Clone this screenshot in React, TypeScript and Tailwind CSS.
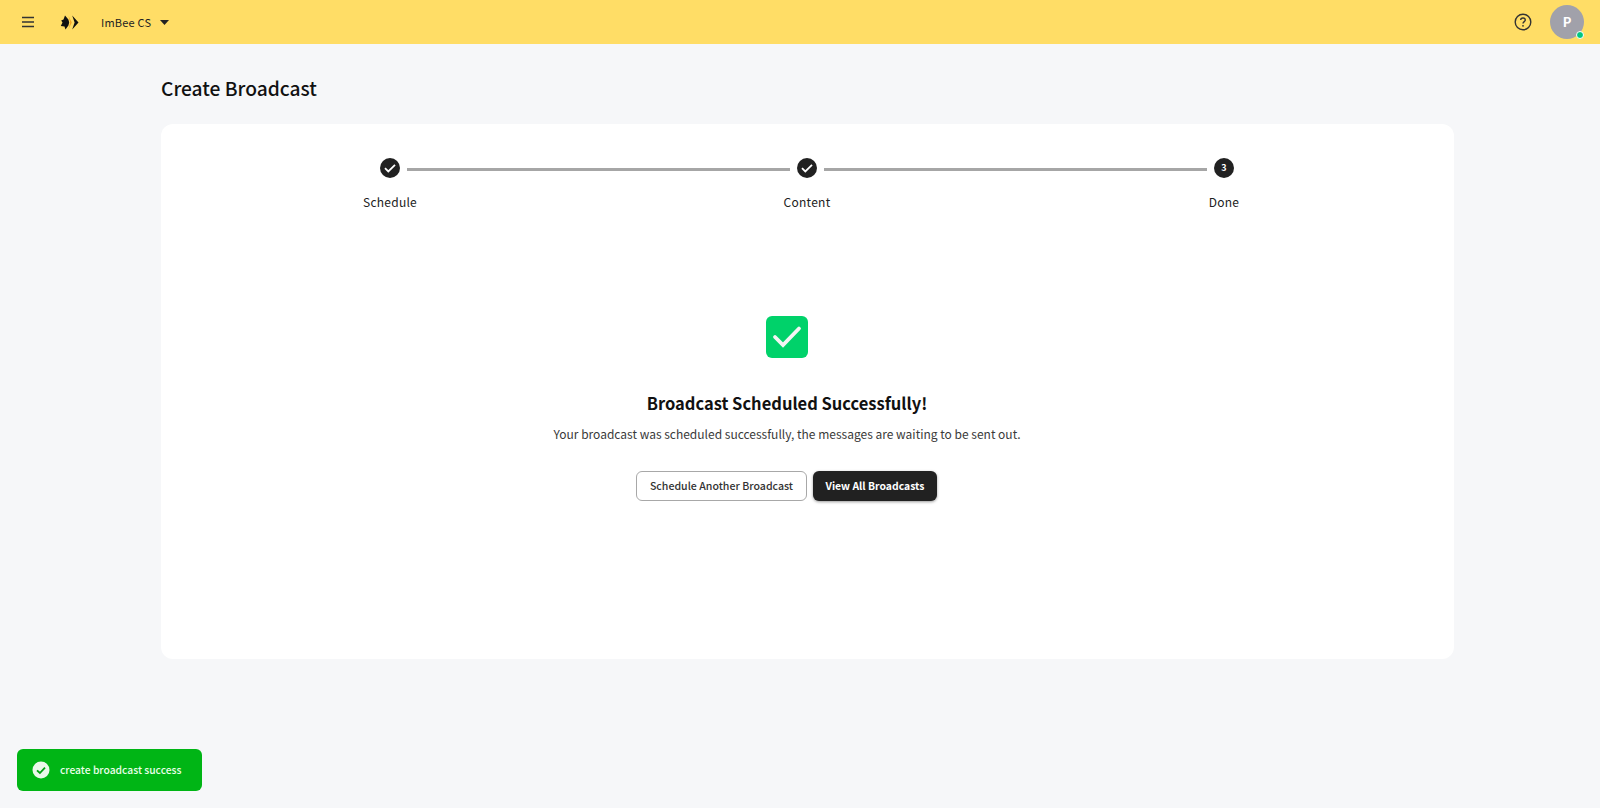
import React from "react";

const font = { fontFamily: '"Noto Sans CJK TC", "Noto Sans CJK SC", "Noto Sans", sans-serif' };

function CheckDot() {
  return (
    <div className="w-5 h-5 rounded-full bg-[#212121] flex items-center justify-center shrink-0">
      <svg width="14" height="14" viewBox="0 0 14 14" fill="none">
        <path d="M2 7.2L5.3 10.4L12 3.8" stroke="white" strokeWidth="1.8" />
      </svg>
    </div>
  );
}

function Label({ children }: { children: React.ReactNode }) {
  return (
    <div className="w-5 flex justify-center whitespace-nowrap text-[12px] tracking-[0.25px] leading-5 text-[#212121]">{children}</div>
  );
}

export default function App() {
  return (
    <div style={font} className="w-[1600px] h-[808px] bg-[#f6f7f9] flex flex-col overflow-hidden relative">
      <header className="h-[44px] bg-[#ffdd66] flex items-center shrink-0 pl-[21px] pr-[16px]">
        <svg width="14" height="12" viewBox="0 0 14 12" fill="none">
          <path d="M1 1.5H13M1 6H13M1 10.5H13" stroke="#333" strokeWidth="1.5" />
        </svg>
        <svg className="ml-[25px]" width="19" height="15" viewBox="0 0 19 15">
          <path d="M5 0.5L8.4 4.5L9.2 7.5L8.4 10.5L5.5 14.5L4.5 11.5L0.8 11L2.5 7.5L1.2 5.5L3.5 4.5Z" fill="#111" />
          <path d="M8.5 1L11.8 7.5L8.5 14L10.2 7.5Z" fill="#f5a623" />
          <path d="M12.2 0.5L18.5 7.5L12.2 14.5L14.6 7.5Z" fill="#111" />
        </svg>
        <span className="ml-[22px] text-[11px] tracking-[0.2px] leading-4 text-[#222]">ImBee CS</span>
        <svg className="ml-[9px]" width="9" height="5" viewBox="0 0 9 5">
          <path d="M0 0H9L4.5 5Z" fill="#222" />
        </svg>
        <div className="flex-1" />
        <svg width="18" height="18" viewBox="0 0 18 18" fill="none">
          <circle cx="9" cy="9" r="7.8" stroke="#333" strokeWidth="1.4" />
          <path d="M6.7 7.1C6.7 5.8 7.7 5 9 5C10.3 5 11.3 5.8 11.3 7C11.3 8.6 9 8.7 9 10.6" stroke="#333" strokeWidth="1.4" />
          <circle cx="9" cy="12.8" r="0.9" fill="#333" />
        </svg>
        <div className="ml-[18px] relative w-[34px] h-[34px] rounded-full bg-[#a1a1aa] flex items-center justify-center text-white text-[13px] font-bold">
          P
          <span className="absolute right-0 bottom-0 w-[6px] h-[6px] rounded-full bg-[#00c781] border border-white box-content" />
        </div>
      </header>

      <main className="w-[1293px] ml-[161px] flex flex-col">
        <h1 className="mt-[30px] text-[19.2px] leading-7 font-medium text-[#111]">Create Broadcast</h1>
        <section className="mt-[22px] h-[535px] bg-white rounded-xl flex flex-col items-center pr-[1px]">
          <div className="w-[854px] mt-[34px] flex items-center gap-[7px]">
            <CheckDot />
            <div className="flex-1 h-[3px] mt-[2px] bg-[#a6a6a6]" />
            <CheckDot />
            <div className="flex-1 h-[3px] mt-[2px] bg-[#a6a6a6]" />
            <div className="w-5 h-5 rounded-full bg-[#212121] flex items-center justify-center text-white text-[9px] font-bold shrink-0">3</div>
          </div>
          <div className="w-[854px] mt-[14px] flex justify-between">
            <Label>Schedule</Label>
            <Label>Content</Label>
            <Label>Done</Label>
          </div>

          <div className="w-full pr-[40px] flex flex-col items-center">
            <div className="mt-[104px] w-[42px] h-[42px] rounded-md bg-[#00d26a] flex items-center justify-center">
              <svg width="30" height="24" viewBox="0 0 30 24" fill="none">
                <path d="M3 12L11 20L27 3.5" stroke="#f4f4f4" strokeWidth="3.8" strokeLinecap="round" />
              </svg>
            </div>
            <h2 className="mt-[33px] text-[16.5px] leading-6 font-bold text-[#111]">Broadcast Scheduled Successfully!</h2>
            <p className="mt-[9px] text-[12px] leading-5 text-[#3a3a3a]">
              Your broadcast was scheduled successfully, the messages are waiting to be sent out.
            </p>
            <div className="mt-[27px] flex gap-[6px] mr-[1px]">
              <button className="w-[171px] h-[30px] rounded-md border border-[#a8a8a8] bg-white text-[10.6px] font-medium text-[#333] flex items-center justify-center">
                Schedule Another Broadcast
              </button>
              <button className="w-[124px] h-[30px] rounded-md bg-[#212121] text-[10.4px] font-bold text-white flex items-center justify-center shadow-[0_1px_3px_rgba(0,0,0,0.4)]">
                View All Broadcasts
              </button>
            </div>
          </div>
        </section>
      </main>

      <div className="absolute left-[17px] top-[749px] w-[185px] h-[42px] rounded-md bg-[#00b515] flex items-center pl-[15px]">
        <svg width="18" height="18" viewBox="0 0 18 18">
          <circle cx="9" cy="9" r="8.5" fill="#eaf8ea" />
          <path d="M5 9.3L7.9 12L13 6.6" stroke="#00a012" strokeWidth="1.8" fill="none" />
        </svg>
        <span className="ml-[10px] text-[10.3px] font-medium leading-4 text-[#eaffea]">create broadcast success</span>
      </div>
    </div>
  );
}
